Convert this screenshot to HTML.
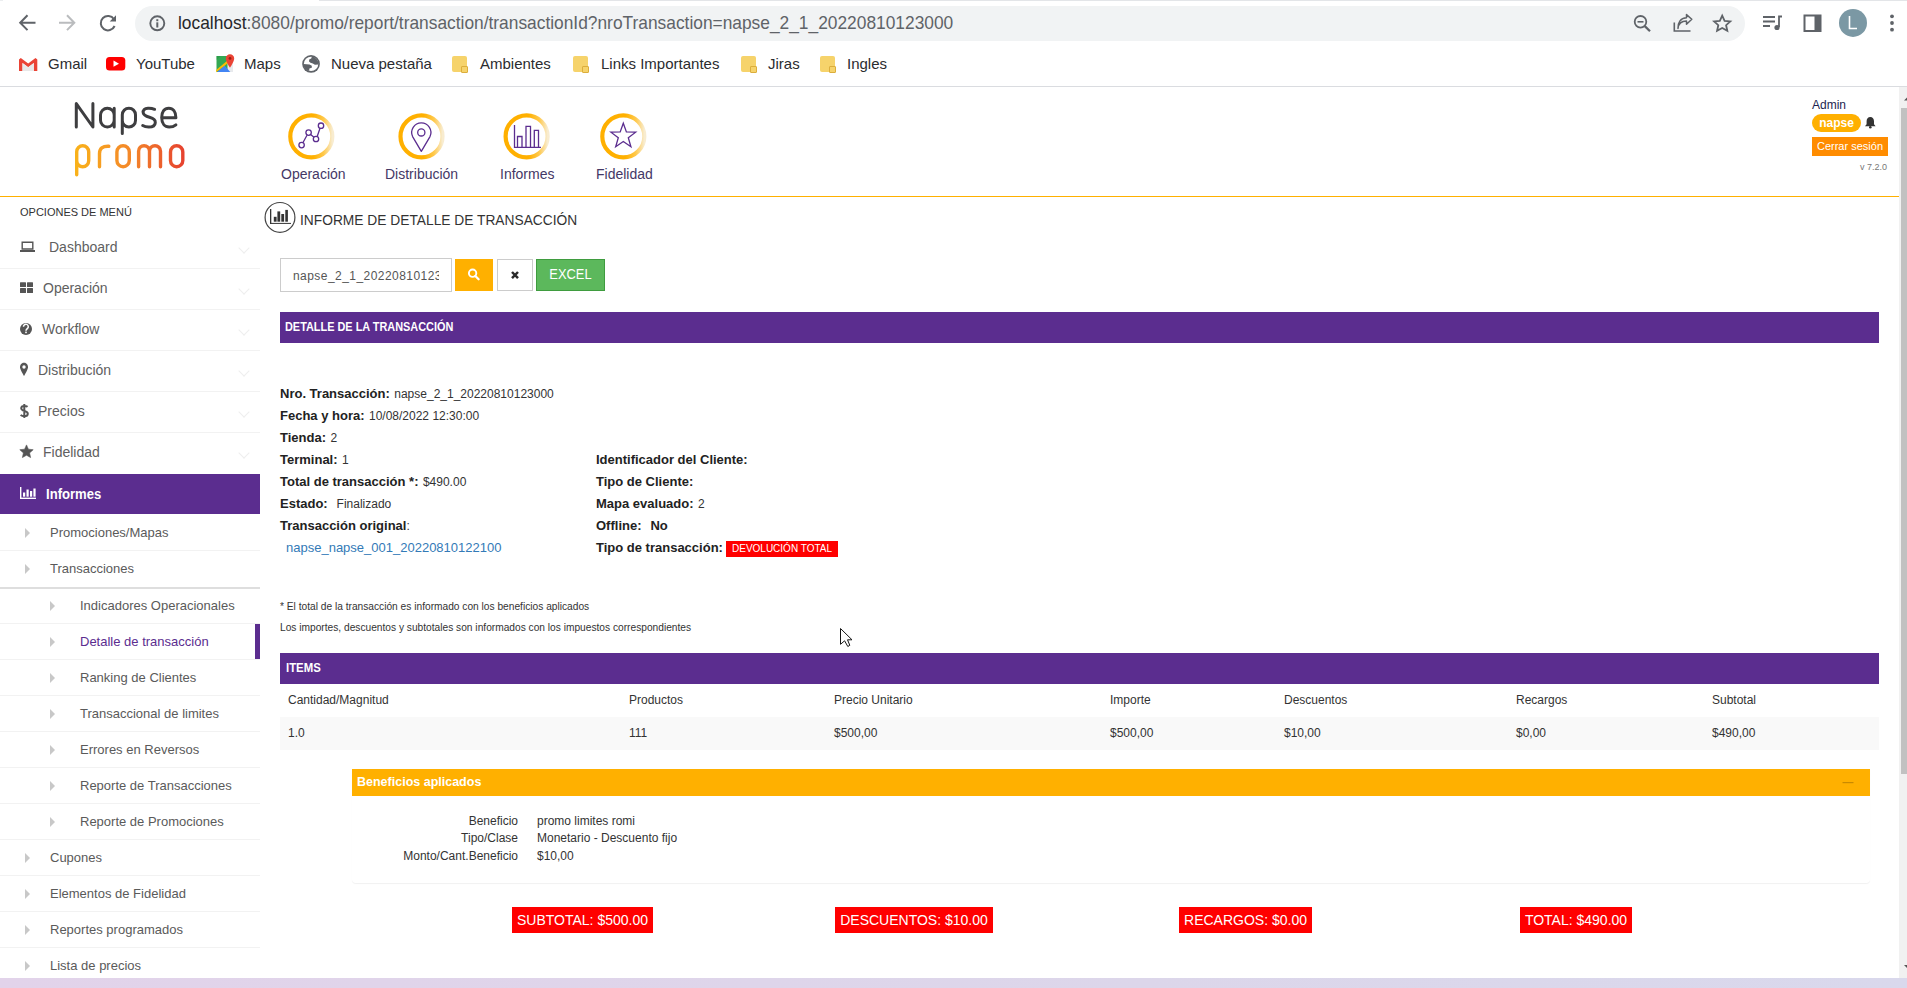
<!DOCTYPE html>
<html><head><meta charset="utf-8">
<style>
*{box-sizing:border-box;margin:0;padding:0}
html,body{width:1907px;height:988px;overflow:hidden;background:#fff;font-family:"Liberation Sans",sans-serif;color:#333;position:relative}
.a{position:absolute;white-space:nowrap}
svg{position:absolute;overflow:visible}
#omni{position:absolute;left:135px;top:6px;width:1610px;height:35px;border-radius:17.5px;background:#f1f3f4}
#url{position:absolute;left:178px;top:12px;font-size:19px;color:#5f6368;transform-origin:0 0;transform:scaleX(0.913)}
#url b{font-weight:normal;color:#26272a}
#bmline{position:absolute;left:0;top:86px;width:1907px;height:1px;background:#dadce0}
.bmt{position:absolute;top:55px;font-size:15px;color:#2b2c2f}
.fold{position:absolute;top:56px;width:15px;height:16px;background:#f6d36b;border-radius:2px}
.fold:after{content:"";position:absolute;right:-1px;bottom:-1px;width:5px;height:5px;background:#f6d36b;border:1px solid #dcae3c;border-radius:1px}
#hline{position:absolute;left:0;top:196px;width:1899px;height:1px;background:#ffb000}
.nav{position:absolute;top:166px;font-size:14px;color:#443866}
#sb{position:absolute;left:1899px;top:87px;width:8px;height:891px;background:#f1f1f1}
#thumb{position:absolute;left:1901px;top:108px;width:6px;height:666px;background:#c1c1c1}
#strip{position:absolute;left:0;top:978px;width:1907px;height:10px;background:linear-gradient(90deg,#e2d3ea,#dcd6ea 60%,#d9d8ec)}
.sep{position:absolute;left:0;width:260px;height:1px;background:#f2f2f2}
.mi{position:absolute;font-size:14px;color:#606060}
.si{position:absolute;font-size:13px;color:#5a5a5a}
.tri{position:absolute;width:0;height:0;border-top:5px solid transparent;border-bottom:5px solid transparent;border-left:5px solid #c8c8c8}
.chev{position:absolute;left:240px;width:8px;height:8px;border-right:1px solid #eee;border-bottom:1px solid #eee;transform:rotate(45deg)}
.ph{position:absolute;left:280px;width:1599px;height:31px;background:#5b2d8f;color:#fff;font-weight:bold;font-size:12px}
.lb{font-weight:bold;font-size:13px;color:#222}
.vl{font-size:12px;color:#333}
.red{position:absolute;background:#f00;color:#fff;font-size:14px;height:26px;line-height:26px;text-align:center}
.th{position:absolute;top:693px;font-size:12px;color:#333}
.td{position:absolute;top:726px;font-size:12px;color:#333}
</style></head><body>
<!-- browser toolbar -->
<div class="a" style="left:319px;top:0;width:1588px;height:1px;background:#e3e5e8"></div>
<div class="a" style="left:0;top:0;width:3px;height:1px;background:#eceef0"></div>
<div id="omni"></div>
<svg width="1907" height="87" style="left:0;top:0">
 <g fill="none" stroke="#5f6368" stroke-width="2" stroke-linecap="butt">
  <path d="M35.5 22.7H20.5M27.5 15.3L20.2 22.7L27.5 30.1"/>
 </g>
 <g fill="none" stroke="#babcbe" stroke-width="2">
  <path d="M59 22.7H74M67 15.3L74.3 22.7L67 30.1"/>
 </g>
 <g fill="none" stroke="#5f6368" stroke-width="2">
  <path d="M114 19.2A7.2 7.2 0 1 0 114.6 26"/>
 </g>
 <path d="M116 15.3V21.6H109.7Z" fill="#5f6368"/>
 <circle cx="157.3" cy="23.3" r="7" fill="none" stroke="#5f6368" stroke-width="1.9"/>
 <rect x="156.3" y="22.3" width="2" height="5.2" fill="#5f6368"/>
 <rect x="156.3" y="19.2" width="2" height="2" fill="#5f6368"/>
 <!-- zoom -->
 <circle cx="1640.5" cy="21.8" r="5.8" fill="none" stroke="#5f6368" stroke-width="1.8"/>
 <path d="M1644.8 26.1L1650 31.3" stroke="#5f6368" stroke-width="2.2"/>
 <path d="M1637.5 21.8H1643.5" stroke="#5f6368" stroke-width="1.6"/>
 <!-- share -->
 <path d="M1674.3 22.5V31H1690.5" fill="none" stroke="#5f6368" stroke-width="1.6"/>
 <path d="M1678 28.5C1678.5 23.5 1682 21 1686.5 21V24.3L1691.8 19.2L1686.5 14.6V17.8C1680.5 18 1677.5 23 1678 28.5Z" fill="none" stroke="#5f6368" stroke-width="1.5" stroke-linejoin="round"/>
 <!-- star -->
 <path d="M1722.2 15.6L1724.6 20.8L1730.3 21.4L1726.1 25.2L1727.3 30.8L1722.2 28L1717.1 30.8L1718.3 25.2L1714.1 21.4L1719.8 20.8Z" fill="none" stroke="#5f6368" stroke-width="1.8" stroke-linejoin="miter"/>
 <!-- media -->
 <path d="M1763 17H1775M1763 21.5H1775M1763 26H1770" stroke="#5f6368" stroke-width="1.8"/>
 <path d="M1779 27V16.5H1782" fill="none" stroke="#5f6368" stroke-width="1.8"/>
 <circle cx="1777" cy="27.5" r="2.6" fill="#5f6368"/>
 <!-- sidebar -->
 <rect x="1804.5" y="15.5" width="16" height="15.5" fill="none" stroke="#5f6368" stroke-width="2"/>
 <rect x="1814.5" y="15.5" width="6" height="15.5" fill="#5f6368"/>
 <!-- avatar -->
 <circle cx="1853" cy="22.9" r="14" fill="#7b98a4"/>
 <path d="M1849.5 16V28.5H1857" fill="none" stroke="#fff" stroke-width="1.6"/>
 <!-- kebab -->
 <circle cx="1892" cy="16.3" r="1.9" fill="#5f6368"/>
 <circle cx="1892" cy="23" r="1.9" fill="#5f6368"/>
 <circle cx="1892" cy="29.7" r="1.9" fill="#5f6368"/>
 <!-- bookmarks icons -->
 <g transform="translate(18.5 57)">
  <path d="M0.5 2.5V14H4V6L9.7 10.3L15.3 6V14H18.8V2.5L17 1L9.7 6.5L2.3 1Z" fill="#ea4335"/>
  <path d="M4 6L9.7 10.3L15.3 6V14H4Z" fill="#e8e8e8"/>
 </g>
 <rect x="106" y="57" width="19.3" height="13.4" rx="3.5" fill="#f00"/>
 <path d="M113.5 60.5V66.8L119 63.65Z" fill="#fff"/>
 <g transform="translate(215.5 54)">
  <path d="M1 2H13V18H1Z" fill="#34a853"/>
  <path d="M12 6H17.5V18H12Z" fill="#e8eaed"/>
  <path d="M1.5 18L9 11.5L14.8 18Z" fill="#4285f4"/>
  <path d="M0.6 18.2L0.6 16L12 6.5L13.5 8.2Z" fill="#fbbc04"/>
  <path d="M1 2H5L1 6Z" fill="#1e8e3e" opacity="0.4"/>
  <path d="M14.5 0.2A4.2 4.2 0 0 0 10.3 4.4C10.3 7.6 14.5 13.6 14.5 13.6C14.5 13.6 18.7 7.6 18.7 4.4A4.2 4.2 0 0 0 14.5 0.2Z" fill="#ea4335"/>
  <circle cx="14.5" cy="4.4" r="1.4" fill="#9c1f10"/>
 </g>
 <circle cx="311.05" cy="63.9" r="8.85" fill="#5f6368"/>
 <circle cx="311.05" cy="63.9" r="7.2" fill="#fff"/>
 <path d="M311.9 56.5A7.4 7.4 0 0 1 318.45 64.5L314.9 64.7L312.8 63.6L310.5 62.7L309 61.6L309.2 59.6L311.2 58.5Z" fill="#5f6368"/>
 <path d="M303.6 63.9L309.5 64.5L311.8 65.8L311.8 67.7L309.4 68.6L309.1 71A7.4 7.4 0 0 1 303.6 63.9Z" fill="#5f6368"/>
</svg>
<div id="url" class="a"><b>localhost</b>:8080/promo/report/transaction/transactionId?nroTransaction=napse_2_1_20220810123000</div>
<div id="bmline"></div>
<div class="bmt a" style="left:48px">Gmail</div>
<div class="bmt a" style="left:136px">YouTube</div>
<div class="bmt a" style="left:244px">Maps</div>
<div class="bmt a" style="left:331px">Nueva pestaña</div>
<div class="fold" style="left:452px"></div>
<div class="bmt a" style="left:480px">Ambientes</div>
<div class="fold" style="left:573px"></div>
<div class="bmt a" style="left:601px">Links Importantes</div>
<div class="fold" style="left:741px"></div>
<div class="bmt a" style="left:768px">Jiras</div>
<div class="fold" style="left:820px"></div>
<div class="bmt a" style="left:847px">Ingles</div>
<!-- app header -->
<svg width="1907" height="200" style="left:0;top:0">
 <defs>
  <linearGradient id="pg" x1="75" y1="0" x2="185" y2="0" gradientUnits="userSpaceOnUse">
   <stop offset="0" stop-color="#f9b21a"/><stop offset="0.5" stop-color="#f4882a"/><stop offset="1" stop-color="#e6412f"/>
  </linearGradient>
  <linearGradient id="rg" x1="0" y1="0" x2="1" y2="0">
   <stop offset="0" stop-color="#ffb000"/><stop offset="0.55" stop-color="#ffb000"/><stop offset="0.8" stop-color="#ffc94d"/><stop offset="1" stop-color="#f8ecd0"/>
  </linearGradient>
 </defs>
 <g fill="none" stroke="#3e3e40" stroke-width="3" stroke-linecap="round" stroke-linejoin="round">
  <path d="M76.3 127V103.6L92.9 127V103.6"/>
  <path d="M114.2 115.05A6.85 6.85 0 0 0 100.5 115.05V120.15A6.85 6.85 0 0 0 114.2 120.15M114.2 108.2V127"/>
  <path d="M122.3 133.5V114.8A6.6 6.6 0 0 1 135.5 114.8V120.4A6.6 6.6 0 0 1 122.3 120.4"/>
  <path d="M154.6 109.3C152.3 108.3 150 108.1 148 108.2C144.5 108.4 142.8 110.3 143.2 112.8C143.6 115.6 146.5 116.5 149.5 117.3C153.2 118.3 155.5 119.5 155.3 122.6C155.1 125.8 152.3 127.1 148.8 127.1C146.3 127.1 144.3 126.6 142.7 125.6"/>
  <path d="M161.8 117.8H175.9C175.9 111.7 173 108.2 168.8 108.2C164.3 108.2 161.7 111.8 161.7 117.6C161.7 123.7 164.8 127.1 169.2 127.1C172 127.1 174.2 126.3 175.9 124.9"/>
 </g>
 <g fill="none" stroke="url(#pg)" stroke-width="3.4" stroke-linecap="round" stroke-linejoin="round">
  <path d="M76.7 174.8V151.7A6 6 0 0 1 88.7 151.7V160.7A6 6 0 0 1 76.7 160.7"/>
  <path d="M99.5 166.7V153.5C99.5 148.5 102.5 146 108.8 146.3"/>
  <path d="M123.1 145.7A6.2 6.2 0 0 1 129.3 151.9V160.5A6.2 6.2 0 0 1 116.9 160.5V151.9A6.2 6.2 0 0 1 123.1 145.7Z"/>
  <path d="M138.6 166.7V151.2A5.45 5.5 0 0 1 149.5 151.2V166.7M149.5 151.2A5.5 5.5 0 0 1 160.5 151.2V166.7"/>
  <path d="M176.65 145.7A6.15 6.2 0 0 1 182.8 151.9V160.5A6.15 6.2 0 0 1 170.5 160.5V151.9A6.15 6.2 0 0 1 176.65 145.7Z"/>
 </g>
 <!-- nav rings -->
 <g fill="none" stroke="url(#rg)" stroke-width="4.2">
  <circle cx="311.3" cy="136.4" r="21"/>
  <circle cx="421.5" cy="136.4" r="21"/>
  <circle cx="526.6" cy="136.4" r="21"/>
  <circle cx="623.3" cy="136.4" r="21"/>
 </g>
 <g fill="none" stroke="#5b2d8f" stroke-width="1.3">
  <path d="M303 142.5L307 135.3M310.6 134.5L314 137.3M317.2 136.5L320 128.2"/>
  <circle cx="301.6" cy="145.1" r="2.7"/>
  <circle cx="308.6" cy="132.6" r="2.7"/>
  <circle cx="316" cy="139" r="2.7"/>
  <circle cx="321" cy="125.7" r="2.7"/>
  <path d="M421.3 151.3L412.6 136.6A9.6 9.6 0 1 1 430 136.6Z" stroke-linejoin="round"/>
  <circle cx="421.3" cy="132.4" r="3.6"/>
  <path d="M514.5 125V147.3H541M517.5 147.3V136.5H522V147.3M526 147.3V126.3H530.5V147.3M534.3 147.3V130.3H538.5V147.3"/>
  <path d="M623.3 123.2L626.4 131.9L635.7 132.2L628.3 137.8L630.9 146.7L623.3 141.5L615.7 146.7L618.3 137.8L610.9 132.2L620.2 131.9Z" stroke-linejoin="miter"/>
 </g>
 <!-- bell -->
 <path d="M1870.3 117C1868 117 1866.6 119 1866.6 121.2V124.2L1865 126.3H1875.6L1874 124.2V121.2C1874 119 1872.6 117 1870.3 117Z" fill="#333"/>
 <circle cx="1870.3" cy="127.3" r="1.3" fill="#333"/>
</svg>
<div id="hline"></div>
<div class="nav a" style="left:281px">Operación</div>
<div class="nav a" style="left:385px">Distribución</div>
<div class="nav a" style="left:500px">Informes</div>
<div class="nav a" style="left:596px">Fidelidad</div>
<div class="a" style="left:1812px;top:98px;font-size:12px;color:#1d1f4f">Admin</div>
<div class="a" style="left:1812px;top:114px;width:49px;height:18px;border-radius:9px;background:#ffb000;color:#fff;font-weight:bold;font-size:12px;line-height:18px;text-align:center">napse</div>
<div class="a" style="left:1812px;top:137px;width:76px;height:19px;background:#ff8c00;color:#fff;font-size:11px;line-height:19px;text-align:center">Cerrar sesión</div>
<div class="a" style="left:1860px;top:162px;font-size:9px;color:#777">v 7.2.0</div>
<div id="sb"></div><div id="thumb"></div>
<svg width="10" height="988" style="left:1899px;top:0"><path d="M5 100.5L8.5 97L12 100.5Z" fill="#555"/><path d="M5 965L8.5 968.5L12 965Z" fill="#555"/></svg>
<!-- sidebar -->
<div class="a" style="left:20px;top:206px;font-size:11px;color:#333">OPCIONES DE MENÚ</div>
<div class="sep" style="top:268px"></div>
<div class="sep" style="top:309px"></div>
<div class="sep" style="top:350px"></div>
<div class="sep" style="top:391px"></div>
<div class="sep" style="top:432px"></div>
<div class="a" style="left:0;top:474px;width:260px;height:40px;background:#5b2d8f"></div>
<svg width="260" height="988" style="left:0;top:0">
 <g fill="#555">
  <path d="M22.2 242.3H32.8V249H22.2Z" fill="none" stroke="#555" stroke-width="1.4"/>
  <rect x="20" y="250" width="15" height="2"/>
  <rect x="20" y="282.3" width="6" height="4.8" rx="0.5"/><rect x="27" y="282.3" width="6" height="4.8" rx="0.5"/>
  <rect x="20" y="288.1" width="6" height="4.8" rx="0.5"/><rect x="27" y="288.1" width="6" height="4.8" rx="0.5"/>
  <circle cx="26" cy="328.9" r="6"/>
  <path d="M24 343.7A4 4 0 0 0 24 343.7Z"/>
  <path d="M24 362.8C21 362.8 20 365.5 20 367.3C20 369.5 24 376 24 376C24 376 28 369.5 28 367.3C28 365.5 27 362.8 24 362.8Z"/>
  <path d="M458 0" />
  <path d="M26.5 444.9L28.4 449.2L33.2 449.7L29.6 452.9L30.6 457.6L26.5 455.2L22.4 457.6L23.4 452.9L19.8 449.7L24.6 449.2Z" stroke="#555" stroke-width="0.6" stroke-linejoin="round"/>
 </g>
 <path d="M23.5 326.8A2.4 2.3 0 1 1 27.8 328C27.2 329 26 329.2 26 330.7" fill="none" stroke="#fff" stroke-width="1.5"/>
 <rect x="25.2" y="331.6" width="1.6" height="1.6" fill="#fff"/>
 <circle cx="24" cy="367" r="1.7" fill="#fff"/>
 <path d="M27.6 406.8C26.8 406.2 25.6 405.9 24.3 405.9C22.3 405.9 21.2 406.9 21.2 408.3C21.2 411.6 27.8 410.3 27.8 413.7C27.8 415.3 26.3 416.2 24.2 416.2C22.7 416.2 21.5 415.7 20.6 415M24.3 404V418" fill="none" stroke="#555" stroke-width="2"/>
 <g fill="#fff">
  <rect x="20" y="487" width="1.4" height="12"/><rect x="20" y="497.6" width="16" height="1.4"/>
  <rect x="23" y="492.5" width="2.2" height="4.2"/><rect x="26.5" y="489.5" width="2.2" height="7.2"/><rect x="30" y="491" width="2.2" height="5.7"/><rect x="33.4" y="488.5" width="2.2" height="8.2"/>
 </g>
</svg>
<div class="mi a" style="left:49px;top:239px">Dashboard</div>
<div class="mi a" style="left:43px;top:280px">Operación</div>
<div class="mi a" style="left:42px;top:321px">Workflow</div>
<div class="mi a" style="left:38px;top:362px">Distribución</div>
<div class="mi a" style="left:38px;top:403px">Precios</div>
<div class="mi a" style="left:43px;top:444px">Fidelidad</div>
<div class="mi a" style="left:46px;top:486px;color:#fff;font-weight:bold;font-size:14px;transform-origin:0 0;transform:scaleX(0.935)">Informes</div>
<div class="chev" style="top:244px"></div>
<div class="chev" style="top:285px"></div>
<div class="chev" style="top:326px"></div>
<div class="chev" style="top:367px"></div>
<div class="chev" style="top:408px"></div>
<div class="chev" style="top:449px"></div>

<div class="sep" style="top:550px"></div>
<div class="sep" style="top:587px;height:2px;background:#dedede"></div>
<div class="sep" style="top:623px"></div>
<div class="sep" style="top:659px"></div>
<div class="sep" style="top:695px"></div>
<div class="sep" style="top:731px"></div>
<div class="sep" style="top:767px"></div>
<div class="sep" style="top:803px"></div>
<div class="sep" style="top:839px"></div>
<div class="sep" style="top:875px"></div>
<div class="sep" style="top:911px"></div>
<div class="sep" style="top:947px"></div>
<div class="a" style="left:255px;top:624px;width:5px;height:35px;background:#5b2d8f"></div>
<div class="tri" style="left:25px;top:528px"></div>
<div class="tri" style="left:25px;top:564px"></div>
<div class="tri" style="left:50px;top:601px"></div>
<div class="tri" style="left:50px;top:637px"></div>
<div class="tri" style="left:50px;top:673px"></div>
<div class="tri" style="left:50px;top:709px"></div>
<div class="tri" style="left:50px;top:745px"></div>
<div class="tri" style="left:50px;top:781px"></div>
<div class="tri" style="left:50px;top:817px"></div>
<div class="tri" style="left:25px;top:853px"></div>
<div class="tri" style="left:25px;top:889px"></div>
<div class="tri" style="left:25px;top:925px"></div>
<div class="tri" style="left:25px;top:961px"></div>
<div class="si a" style="left:50px;top:525px">Promociones/Mapas</div>
<div class="si a" style="left:50px;top:561px">Transacciones</div>
<div class="si a" style="left:80px;top:598px">Indicadores Operacionales</div>
<div class="si a" style="left:80px;top:634px;color:#5b2d8f">Detalle de transacción</div>
<div class="si a" style="left:80px;top:670px">Ranking de Clientes</div>
<div class="si a" style="left:80px;top:706px">Transaccional de limites</div>
<div class="si a" style="left:80px;top:742px">Errores en Reversos</div>
<div class="si a" style="left:80px;top:778px">Reporte de Transacciones</div>
<div class="si a" style="left:80px;top:814px">Reporte de Promociones</div>
<div class="si a" style="left:50px;top:850px">Cupones</div>
<div class="si a" style="left:50px;top:886px">Elementos de Fidelidad</div>
<div class="si a" style="left:50px;top:922px">Reportes programados</div>
<div class="si a" style="left:50px;top:958px">Lista de precios</div>
<div id="strip"></div>
<!-- main -->

<div class="a" style="left:300px;top:211px;font-size:15px;color:#333;transform-origin:0 0;transform:scaleX(0.918)">INFORME DE DETALLE DE TRANSACCIÓN</div>
<div class="a" style="left:280px;top:258px;width:172px;height:34px;border:1px solid #ccc;background:#fff"></div>
<div class="a" style="left:293px;top:269px;width:146px;overflow:hidden;font-size:12px;letter-spacing:0.45px;color:#555">napse_2_1_20220810123000</div>
<div class="a" style="left:455px;top:259px;width:38px;height:32px;background:#ffb000"></div>
<div class="a" style="left:497px;top:259px;width:36px;height:32px;border:1px solid #ccc;background:#fff"></div>
<div class="a" style="left:536px;top:259px;width:69px;height:32px;background:#5cb85c;border:1px solid #3f9c3f;"></div><div class="a" style="left:536px;top:259px;width:69px;color:#fff;font-size:14px;line-height:30px;text-align:center;transform:scaleX(0.92)">EXCEL</div>

<div class="ph" style="top:312px"></div><div class="a" style="left:285px;top:320px;font-size:12.5px;font-weight:bold;color:#fff;transform-origin:0 0;transform:scaleX(0.872)">DETALLE DE LA TRANSACCIÓN</div>

<div class="a" style="left:280px;top:384px"><span class="lb">Nro. Transacción:</span> <span class="vl">napse_2_1_20220810123000</span></div>
<div class="a" style="left:280px;top:406px"><span class="lb">Fecha y hora:</span> <span class="vl">10/08/2022 12:30:00</span></div>
<div class="a" style="left:280px;top:428px"><span class="lb">Tienda:</span> <span class="vl">2</span></div>
<div class="a" style="left:280px;top:450px"><span class="lb">Terminal:</span> <span class="vl">1</span></div>
<div class="a" style="left:280px;top:472px"><span class="lb">Total de transacción *:</span> <span class="vl">$490.00</span></div>
<div class="a" style="left:280px;top:494px"><span class="lb">Estado:</span> &nbsp;<span class="vl">Finalizado</span></div>
<div class="a" style="left:280px;top:516px"><span class="lb">Transacción original</span><span class="vl">:</span></div>
<div class="a" style="left:286px;top:540px;font-size:13px;color:#337ab7">napse_napse_001_20220810122100</div>

<div class="a" style="left:596px;top:450px"><span class="lb">Identificador del Cliente:</span></div>
<div class="a" style="left:596px;top:472px"><span class="lb">Tipo de Cliente:</span></div>
<div class="a" style="left:596px;top:494px"><span class="lb">Mapa evaluado:</span> <span class="vl">2</span></div>
<div class="a" style="left:596px;top:516px"><span class="lb">Offline:</span> &nbsp;<span class="lb">No</span></div>
<div class="a" style="left:596px;top:538px"><span class="lb">Tipo de transacción:</span></div>
<div class="a" style="left:726px;top:541px;width:112px;height:16px;background:#f00;color:#fff;font-size:10px;line-height:16px;text-align:center">DEVOLUCIÓN TOTAL</div>

<div class="a" style="left:280px;top:601px;font-size:10.2px;color:#333">* El total de la transacción es informado con los beneficios aplicados</div>
<div class="a" style="left:280px;top:622px;font-size:10.2px;color:#333">Los importes, descuentos y subtotales son informados con los impuestos correspondientes</div>

<div class="ph" style="top:653px"></div><div class="a" style="left:285.5px;top:661px;font-size:12.5px;font-weight:bold;color:#fff;transform-origin:0 0;transform:scaleX(0.91)">ITEMS</div>
<div class="th a" style="left:288px">Cantidad/Magnitud</div>
<div class="th a" style="left:629px">Productos</div>
<div class="th a" style="left:834px">Precio Unitario</div>
<div class="th a" style="left:1110px">Importe</div>
<div class="th a" style="left:1284px">Descuentos</div>
<div class="th a" style="left:1516px">Recargos</div>
<div class="th a" style="left:1712px">Subtotal</div>
<div class="a" style="left:280px;top:717px;width:1599px;height:33px;background:#f9f9f9"></div>
<div class="td a" style="left:288px">1.0</div>
<div class="td a" style="left:629px">111</div>
<div class="td a" style="left:834px">$500,00</div>
<div class="td a" style="left:1110px">$500,00</div>
<div class="td a" style="left:1284px">$10,00</div>
<div class="td a" style="left:1516px">$0,00</div>
<div class="td a" style="left:1712px">$490,00</div>

<div class="a" style="left:352px;top:769px;width:1518px;height:114px;border-radius:0 0 4px 4px;box-shadow:0 1px 1px rgba(0,0,0,0.06)"></div>
<div class="a" style="left:352px;top:769px;width:1518px;height:27px;background:#ffb000;color:#fff;font-size:12.5px;font-weight:bold;line-height:26px;padding-left:5px">Beneficios aplicados</div>
<div class="a" style="left:352px;top:814px;width:166px;text-align:right;font-size:12px;color:#333">Beneficio</div>
<div class="a" style="left:352px;top:831px;width:166px;text-align:right;font-size:12px;color:#333">Tipo/Clase</div>
<div class="a" style="left:352px;top:849px;width:166px;text-align:right;font-size:12px;color:#333">Monto/Cant.Beneficio</div>
<div class="a" style="left:537px;top:814px;font-size:12px;color:#333">promo limites romi</div>
<div class="a" style="left:537px;top:831px;font-size:12px;color:#333">Monetario - Descuento fijo</div>
<div class="a" style="left:537px;top:849px;font-size:12px;color:#333">$10,00</div>

<div class="red" style="left:512px;top:907px;width:141px">SUBTOTAL: $500.00</div>
<div class="red" style="left:835px;top:907px;width:158px">DESCUENTOS: $10.00</div>
<div class="red" style="left:1179px;top:907px;width:133px">RECARGOS: $0.00</div>
<div class="red" style="left:1520px;top:907px;width:112px">TOTAL: $490.00</div>
<svg width="1907" height="988" style="left:0;top:0">
 <circle cx="280" cy="217.4" r="14.9" fill="none" stroke="#444" stroke-width="1.2"/>
 <g fill="#333">
  <rect x="270" y="209" width="1.3" height="15"/><rect x="270" y="222.9" width="21" height="1"/>
  <rect x="273.8" y="216.8" width="2.8" height="4.9"/><rect x="277.4" y="211.4" width="2.8" height="10.3"/><rect x="281.3" y="214" width="2.8" height="7.7"/><rect x="285.3" y="209.9" width="2.6" height="11.8"/>
 </g>
 <!-- search icon -->
 <circle cx="472.6" cy="273.2" r="3.7" fill="none" stroke="#fff" stroke-width="1.9"/>
 <path d="M475.3 276L478.6 279.3" stroke="#fff" stroke-width="2.3" stroke-linecap="round"/>
 <path d="M512 272L518 278.2M518 272L512 278.2" stroke="#2a2a2a" stroke-width="2.5"/>
 <!-- minus in panel -->
 <rect x="1842.5" y="782" width="11" height="1.2" fill="#c98a00"/>
 <!-- cursor -->
 <path d="M840.5 628.5V644.3L844.6 640.8L847.8 646.5L849.8 645.3L847.5 639.8L852 639.8Z" fill="#fff" stroke="#161616" stroke-width="1" stroke-linejoin="round"/>
</svg>
</body></html>
